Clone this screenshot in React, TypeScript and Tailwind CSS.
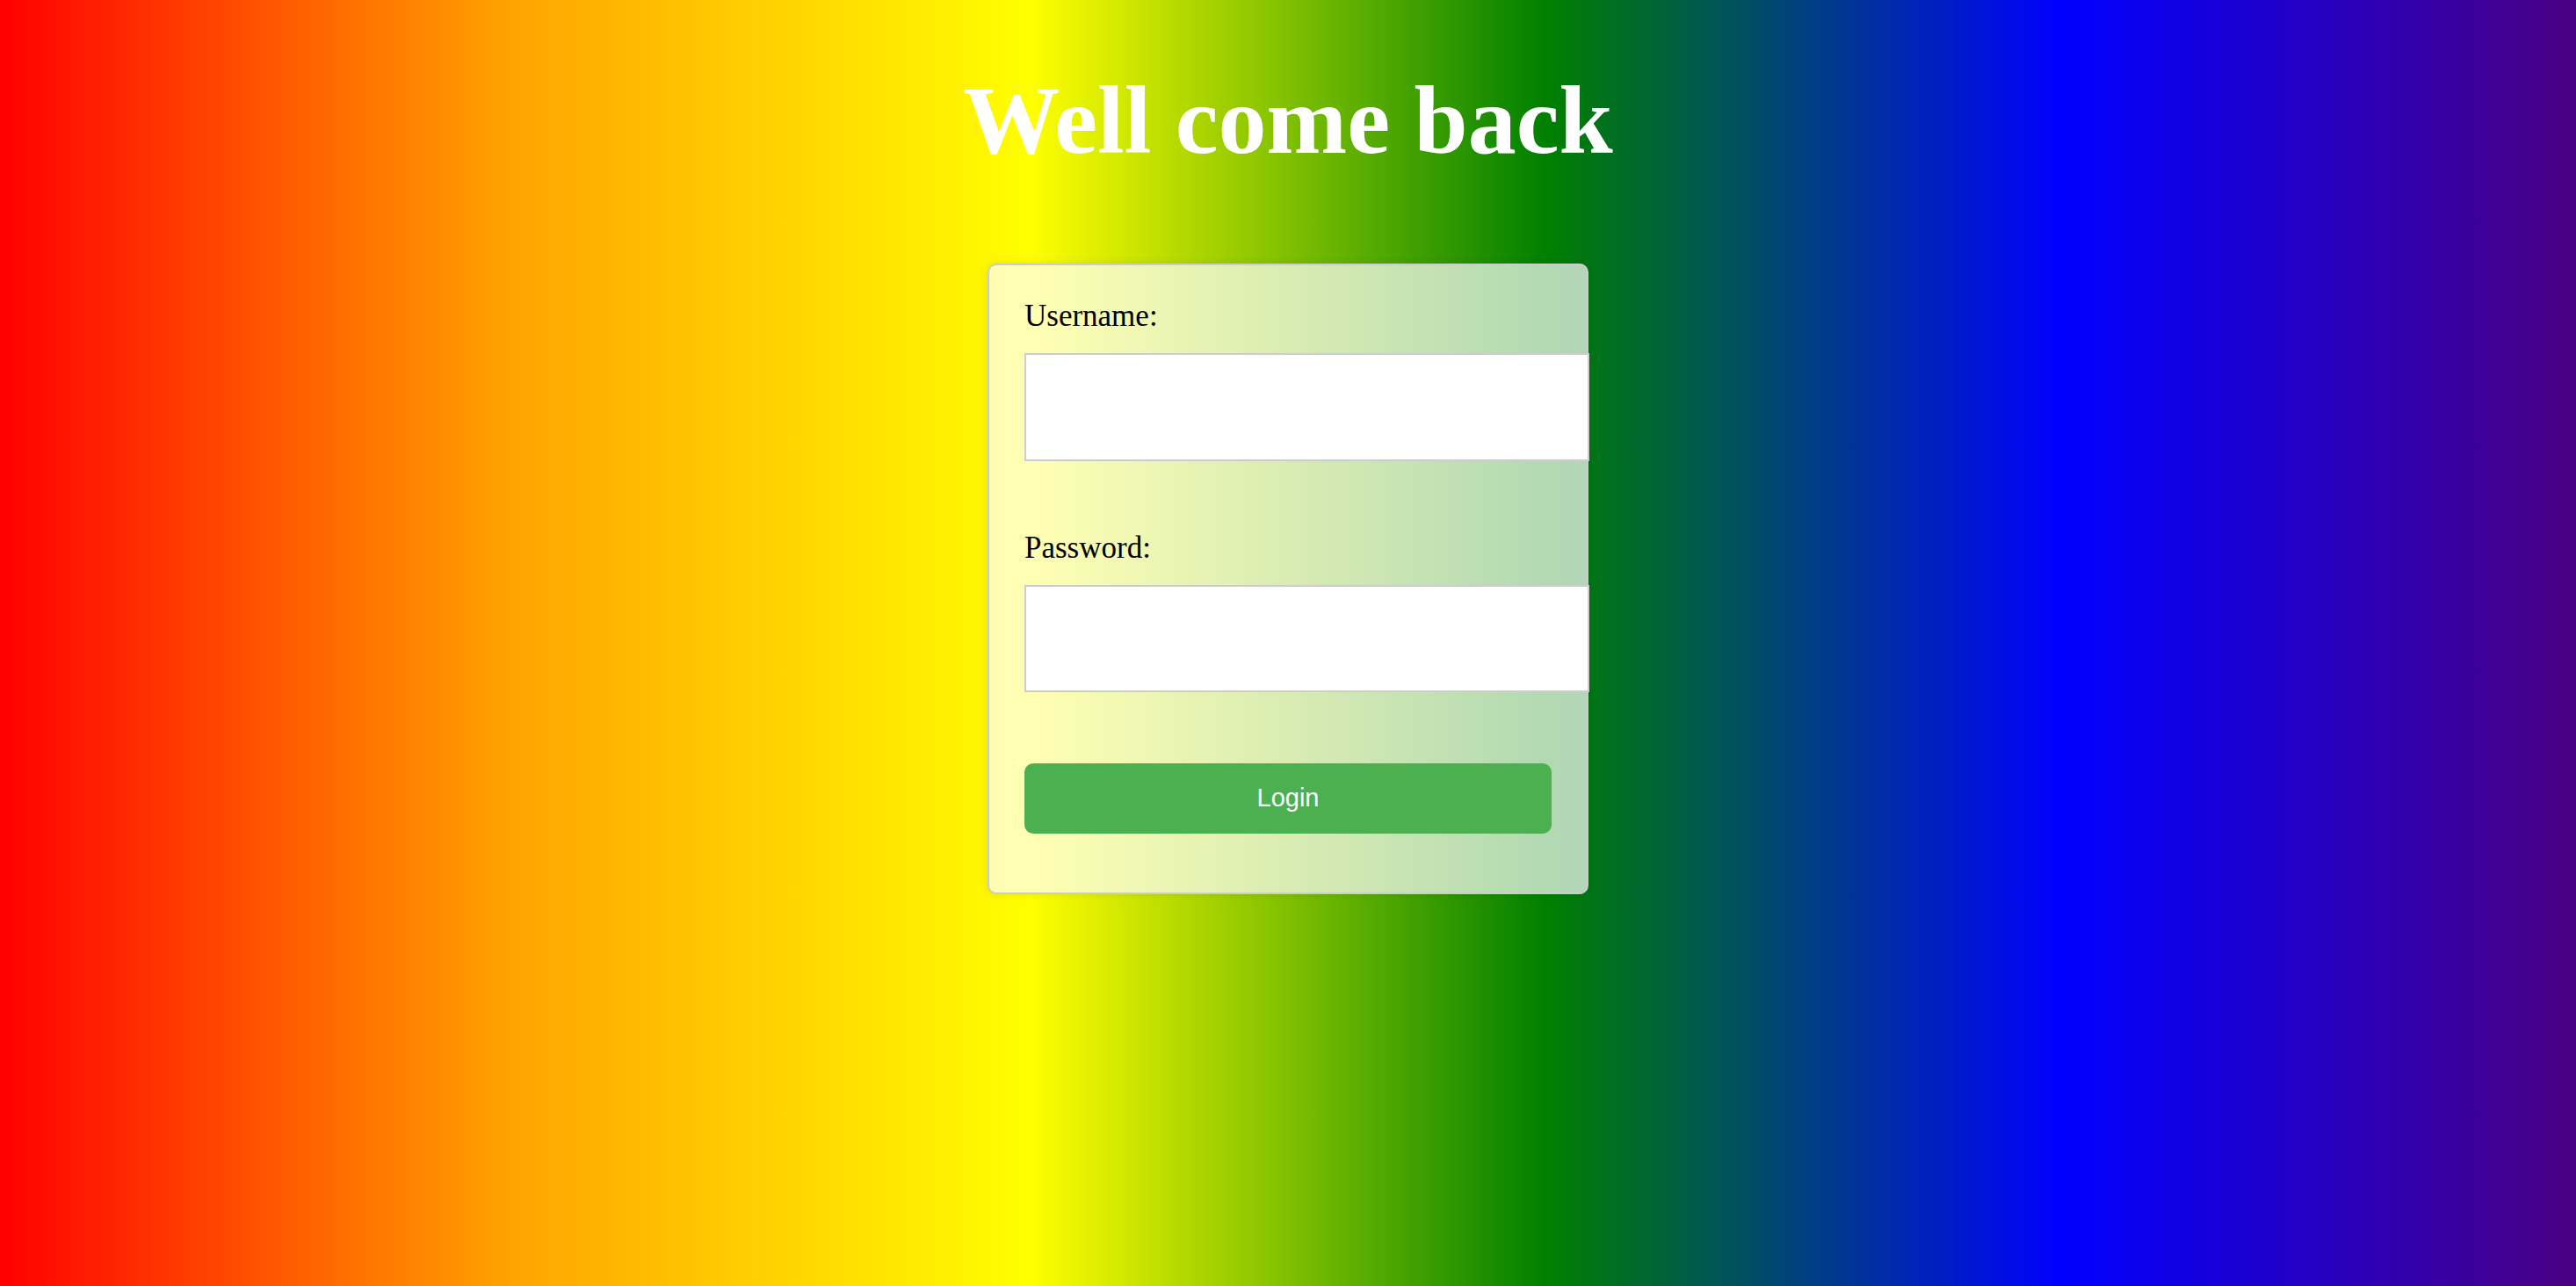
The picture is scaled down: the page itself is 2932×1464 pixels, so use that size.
import React from 'react';

const App: React.FC = () => {
  return (
    <div className="w-full h-[1464px] flex flex-col items-center bg-[linear-gradient(to_right,red,orange,yellow,green,blue,indigo)] font-['Liberation_Serif',serif]">
      <h1 className="mt-[82px] text-[110px] leading-[110px] font-bold text-white">Well come back</h1>

      <form
        className="mt-[108px] w-[684px] border-2 border-[#ccc] rounded-[10px] bg-white/70 shadow-[0_0_10px_rgba(0,0,0,0.1)] pt-[38px] pb-[67px] px-[40px]"
        onSubmit={(e) => e.preventDefault()}
      >
        <label htmlFor="username" className="block text-[35px] leading-[40px] text-black mb-[22px]">
          Username:
        </label>
        <input
          id="username"
          type="text"
          className="block w-[643px] h-[123px] border-2 border-[#ccc] bg-white px-[20px] text-[35px] outline-none"
        />

        <label htmlFor="password" className="block text-[35px] leading-[40px] text-black mt-[79px] mb-[22px]">
          Password:
        </label>
        <input
          id="password"
          type="password"
          className="block w-[643px] h-[122px] border-2 border-[#ccc] bg-white px-[20px] text-[35px] outline-none"
        />

        <button
          type="submit"
          className="mt-[81px] w-full h-[80px] rounded-[10px] bg-[#4caf50] text-white text-[29px] font-['Liberation_Sans',Arial,sans-serif]"
        >
          Login
        </button>
      </form>
    </div>
  );
};

export default App;
